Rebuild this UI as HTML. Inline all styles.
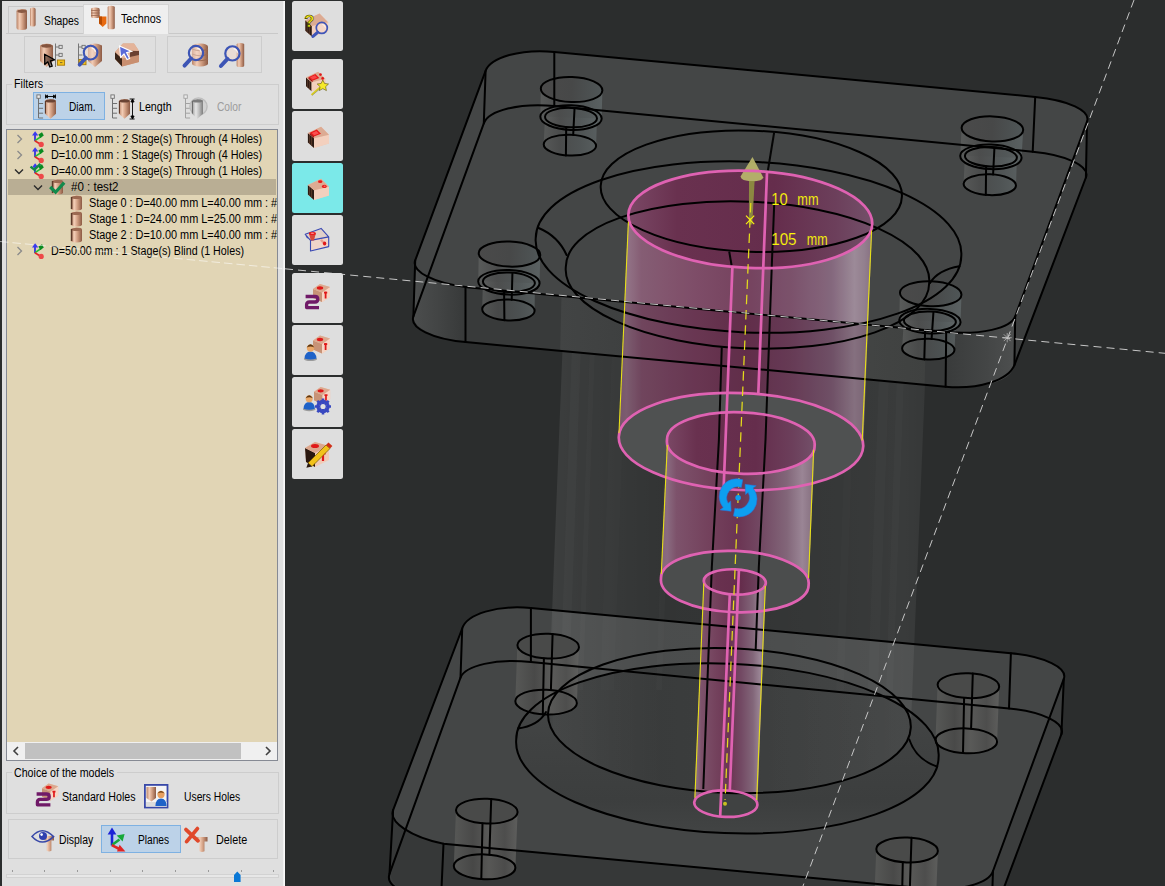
<!DOCTYPE html>
<html><head><meta charset="utf-8"><title>Holes</title>
<style>
html,body{margin:0;padding:0;}
body{width:1165px;height:886px;overflow:hidden;background:#2b2d2d;position:relative;font-family:"Liberation Sans",sans-serif;font-size:12px;color:#000;}

#pbg{position:absolute;left:2px;top:1px;width:283px;height:885px;background:#dfdfdf;}
#pbg i{position:absolute;right:0;top:0;width:2px;height:100%;background:linear-gradient(90deg,#ececec,#fdfdfd);}
.gb{position:absolute;border:1px solid #cdcdcd;box-sizing:border-box;}
.t{position:absolute;white-space:nowrap;line-height:14px;height:14px;font-size:12px;transform:scaleX(0.885);transform-origin:0 50%;color:#000;}
.sel{position:absolute;box-sizing:border-box;background:#bcd2e8;border:1px solid #7eb1e2;}
.tb{position:absolute;left:292px;width:51px;height:50px;background:#dedede;border-radius:2.5px;}
.ic{position:absolute;overflow:visible;}
#tree{position:absolute;left:6px;top:129px;width:272px;height:632px;box-sizing:border-box;background:#e1d5b5;border:1px solid #868a94;overflow:hidden;}
#tree .t{font-size:12px;}
#tree .row{position:absolute;left:1px;width:268px;height:16px;}

</style></head><body>
<svg width="1165" height="886" viewBox="0 0 1165 886" style="position:absolute;left:0;top:0">
<defs>
<clipPath id="vp"><rect x="285" y="0" width="880" height="886"/></clipPath>
<linearGradient id="gpk" x1="0" x2="1" y1="0" y2="0">
<stop offset="0" stop-color="#84637a"/><stop offset="0.03" stop-color="#8a6a7e"/><stop offset="0.09" stop-color="#7c5069"/><stop offset="0.3" stop-color="#743f5c"/><stop offset="0.5" stop-color="#6b3452"/><stop offset="0.68" stop-color="#714460"/><stop offset="0.84" stop-color="#7b5c73"/><stop offset="0.93" stop-color="#948190"/><stop offset="0.97" stop-color="#8a7585"/><stop offset="1" stop-color="#7d6577"/>
</linearGradient>
<linearGradient id="gpk2" x1="0" x2="1" y1="0" y2="0">
<stop offset="0" stop-color="#85647b"/><stop offset="0.04" stop-color="#8a6b80"/><stop offset="0.1" stop-color="#7d526b"/><stop offset="0.3" stop-color="#74425d"/><stop offset="0.5" stop-color="#6b3553"/><stop offset="0.66" stop-color="#734a64"/><stop offset="0.82" stop-color="#826679"/><stop offset="0.92" stop-color="#9a8595"/><stop offset="0.97" stop-color="#8c7686"/><stop offset="1" stop-color="#7f687a"/>
</linearGradient>
<linearGradient id="gpk0" x1="0" x2="1" y1="0" y2="0">
<stop offset="0" stop-color="#7a4865"/><stop offset="0.2" stop-color="#69314f"/><stop offset="0.6" stop-color="#652d4c"/><stop offset="0.85" stop-color="#6c3f5b"/><stop offset="1" stop-color="#735069"/>
</linearGradient>
<linearGradient id="gcol" x1="0" x2="1" y1="0" y2="0">
<stop offset="0" stop-color="#fff" stop-opacity="0.04"/><stop offset="0.015" stop-color="#fff" stop-opacity="0.08"/><stop offset="0.06" stop-color="#fff" stop-opacity="0.072"/><stop offset="0.14" stop-color="#fff" stop-opacity="0.06"/><stop offset="0.3" stop-color="#fff" stop-opacity="0.035"/><stop offset="0.55" stop-color="#fff" stop-opacity="0.04"/><stop offset="0.8" stop-color="#fff" stop-opacity="0.055"/><stop offset="0.93" stop-color="#fff" stop-opacity="0.068"/><stop offset="0.985" stop-color="#fff" stop-opacity="0.055"/><stop offset="1" stop-color="#fff" stop-opacity="0.03"/>
</linearGradient>
<linearGradient id="gfil" x1="0" x2="0" y1="0" y2="1"><stop offset="0" stop-color="#484a4a"/><stop offset="0.45" stop-color="#404242"/><stop offset="0.8" stop-color="#3c3e3e"/><stop offset="1" stop-color="#424444"/></linearGradient>
<linearGradient id="gint" x1="0" x2="1" y1="0" y2="0"><stop offset="0" stop-color="#353737"/><stop offset="0.25" stop-color="#323434"/><stop offset="0.6" stop-color="#353737"/><stop offset="1" stop-color="#3a3c3c"/></linearGradient>
<linearGradient id="gcolf" x1="0" x2="1" y1="0" y2="0"><stop offset="0" stop-color="#424444"/><stop offset="0.1" stop-color="#404242"/><stop offset="0.3" stop-color="#3b3d3d"/><stop offset="0.6" stop-color="#3c3e3e"/><stop offset="0.85" stop-color="#424443"/><stop offset="1" stop-color="#3f4140"/></linearGradient>
<linearGradient id="gcl" x1="0" x2="1" y1="0" y2="0"><stop offset="0" stop-color="#4b4d4d"/><stop offset="0.5" stop-color="#424444"/><stop offset="1" stop-color="#373939"/></linearGradient>
<linearGradient id="gcr" x1="0" x2="1" y1="0" y2="0"><stop offset="0" stop-color="#393b3b"/><stop offset="0.6" stop-color="#444646"/><stop offset="1" stop-color="#4d4f4f"/></linearGradient>
<linearGradient id="ghole" x1="0" x2="1" y1="0" y2="0">
<stop offset="0" stop-color="#5e605f"/><stop offset="0.3" stop-color="#4d4e4e"/><stop offset="0.7" stop-color="#545a5b"/><stop offset="1" stop-color="#606869"/>
</linearGradient>
<linearGradient id="gholet" x1="0" x2="1" y1="0" y2="0"><stop offset="0" stop-color="#4a4a4a"/><stop offset="0.5" stop-color="#474848"/><stop offset="1" stop-color="#4f5657"/></linearGradient>
<linearGradient id="gholeb" x1="0" x2="1" y1="0" y2="0">
<stop offset="0" stop-color="#5a5b59"/><stop offset="0.3" stop-color="#4a4a49"/><stop offset="0.55" stop-color="#5d5d5b"/><stop offset="0.8" stop-color="#4f4f4e"/><stop offset="1" stop-color="#626260"/>
</linearGradient>
</defs>
<g clip-path="url(#vp)">
<rect x="285" y="0" width="880" height="886" fill="#2b2d2d"/>
<path d="M389.5 873.8C385 886.1 407.2 897.6 440 900L925 945C958.6 947.8 987.2 939 990 925L1061.4 734.2C1065.8 723 1042.7 711.6 1009 708.4L530.9 662.1C496.2 658.4 465.3 665.3 460.5 677.7Z" fill="#3a3c3c"/>
<path d="M1063.8 678.9L1061.4 734.2L1005 886L920 886L993 871Z" fill="#3b3d3d"/>
<path d="M393.1 810.1L389.5 873.8L396 886L930 886L925 888L443.5 843.8Z" fill="#363838"/>
<path d="M393.1 810.1C388.6 822.1 410.7 836.9 443.5 843.8L925 888.4C958.9 891.6 988.8 883.9 993 871L1063.8 678.9C1067.9 667.7 1044.7 656.4 1010.9 653.2L530.9 608C497 604.9 466.7 613.9 462.2 628.5Z" fill="#444646"/>
<clipPath id="cbp"><path d="M516.2 739.7A211.4 83.6 2.4 1 1 938.6 757.1A211.4 83.6 2.4 1 1 516.2 739.7Z"/></clipPath>
<path d="M516.2 739.7A211.4 83.6 2.4 1 1 938.6 757.1A211.4 83.6 2.4 1 1 516.2 739.7Z" fill="url(#gfil)"/>
<path d="M548 713.6A181.5 72.3 2.2 1 1 910.8 727.6A181.5 72.3 2.2 1 1 548 713.6Z" fill="url(#gint)" clip-path="url(#cbp)"/>
<path d="M565.8 267L929.2 283L910.8 727.6A181.5 72.3 2.22 0 1 548 713.6Z" fill="url(#gcol)"/>
<g fill="#fff">
<path d="M572 345L581 345L569 690L560 690Z" opacity="0.025"/>
<path d="M590 345L595 345L583 690L578 690Z" opacity="0.018"/>
<path d="M612 345L626 345L614 690L600 690Z" opacity="0.012"/>
<path d="M668 345L674 345L662 690L656 690Z" opacity="0.015"/>
<path d="M880 345L890 345L878 690L868 690Z" opacity="0.02"/>
<path d="M898 345L905 345L893 690L886 690Z" opacity="0.02"/>
<path d="M848 345L856 345L844 690L836 690Z" opacity="0.012"/>
</g>
<path d="M413.4 316.3C409.3 327.7 432.2 339 465.5 342L945.6 386.7C978.2 389.7 1008.5 380.2 1014.4 365.1L1085.9 177.5C1090.3 166.3 1066.9 154.9 1032.7 151.7L554.3 106C519.6 102.7 488.6 110.4 483.8 123.4Z" fill="#3b3d3d"/>
<path d="M415.2 260.4L413.4 316.3L465.5 342L945.6 386.7L1014.4 365.1L1015.2 316.4L946.4 332L467 287.2Z" fill="#383a3a"/>
<path d="M561.5 296.2L926 330.5L924.6 384.8L560.2 350.7Z" fill="url(#gcolf)"/>
<path d="M415.2 260.4L413.4 316.3C413 327 432 338 465.5 342L465.5 288C440 284 416 272 415.2 260.4Z" fill="url(#gcl)"/>
<path d="M946.2 332L945.6 386.7C985 390 1013 380 1014.4 365.1L1015.2 316.4C1012 328 985 334 946.2 332Z" fill="url(#gcr)"/>
<path d="M1087 121.5L1085.9 177.5L1014.4 365.1L1015.2 316.4Z" fill="#3d3f3f"/>
<path d="M415.2 260.4C411.1 271.4 433.8 283.2 467 287.2L946.4 332C980.4 335.2 1010.7 328.3 1015.2 316.4L1087 121.5C1091 110.8 1068.2 100 1035.2 96.9L554.3 51.9C520.9 48.8 490.7 57.1 485.6 70.9Z" fill="#444646"/>
<path d="M540.8 88.5L540.4 116.8A30.6 12.3 2 0 0 601.6 118.4L602.4 90.5Z" fill="url(#ghole)" opacity="0.8"/>
<path d="M545 116.6L543.7 144.3A26.2 10.4 2 0 0 596.1 145.9L597 118.6Z" fill="url(#ghole)" opacity="0.7"/>
<ellipse cx="571.6" cy="89.5" rx="30.8" ry="12.5" transform="rotate(2 571.6 89.5)" fill="url(#gholet)"/>
<path d="M961.6 127.9L960.3 156A30.6 12.3 2 0 0 1021.5 157.6L1023.2 129.9Z" fill="url(#ghole)" opacity="0.8"/>
<path d="M964.9 155.8L963.6 183.9A26.2 10.4 2 0 0 1016 185.5L1016.9 157.8Z" fill="url(#ghole)" opacity="0.7"/>
<ellipse cx="992.4" cy="128.9" rx="30.8" ry="12.5" transform="rotate(2 992.4 128.9)" fill="url(#gholet)"/>
<path d="M478.7 253.1L478.3 281.5A30.6 12.3 2 0 0 539.5 283.1L540.3 255.1Z" fill="url(#ghole)" opacity="0.8"/>
<path d="M482.9 281.3L482.2 309.2A26.2 10.4 2 0 0 534.6 310.8L534.9 283.3Z" fill="url(#ghole)" opacity="0.7"/>
<ellipse cx="509.5" cy="254.1" rx="30.8" ry="12.5" transform="rotate(2 509.5 254.1)" fill="url(#gholet)"/>
<path d="M899.9 292.7L899.3 320.4A30.6 12.3 2 0 0 960.5 322L961.5 294.7Z" fill="url(#ghole)" opacity="0.8"/>
<path d="M903.9 320.2L902.1 348.3A26.2 10.4 2 0 0 954.5 349.9L955.9 322.2Z" fill="url(#ghole)" opacity="0.7"/>
<ellipse cx="930.7" cy="293.7" rx="30.8" ry="12.5" transform="rotate(2 930.7 293.7)" fill="url(#gholet)"/>
<path d="M517.4 645.1L515.3 701.3A30.8 12.4 2 0 0 576.9 702.9L579 647.1Z" fill="url(#gholeb)" opacity="0.85"/>
<ellipse cx="548.2" cy="646.1" rx="30.8" ry="12.4" transform="rotate(2 548.2 646.1)" fill="#494a49"/>
<path d="M937.6 684.7L935.5 740A30.8 12.4 2 0 0 997.1 741.6L999.2 686.7Z" fill="url(#gholeb)" opacity="0.85"/>
<ellipse cx="968.4" cy="685.7" rx="30.8" ry="12.4" transform="rotate(2 968.4 685.7)" fill="#494a49"/>
<path d="M456 810.1L453.8 866A30.8 12.4 2 0 0 515.4 867.6L517.6 812.1Z" fill="url(#gholeb)" opacity="0.85"/>
<ellipse cx="486.8" cy="811.1" rx="30.8" ry="12.4" transform="rotate(2 486.8 811.1)" fill="#494a49"/>
<path d="M876.3 849L874.1 904.7A30.8 12.4 2 0 0 935.7 906.3L937.9 851Z" fill="url(#gholeb)" opacity="0.85"/>
<ellipse cx="907.1" cy="850" rx="30.8" ry="12.4" transform="rotate(2 907.1 850)" fill="#494a49"/>
<clipPath id="cb0"><path d="M628.4 214.5A122 48.3 2.3 0 1 872.2 224.3L863.2 446.5A122.3 48.2 2.3 0 1 618.8 436.7Z" fill="#000"/></clipPath>
<path d="M628.4 214.5A122 48.3 2.3 0 1 872.2 224.3L863.2 446.5A122.3 48.2 2.3 0 1 618.8 436.7Z" fill="url(#gpk)"/>
<g clip-path="url(#cb0)"><path d="M600 150L900 150L900 327.9L600 299.1Z" fill="#fff" opacity="0.075"/><path d="M600 299.1L900 327.9L900 520L600 520Z" fill="#20000c" opacity="0.13"/></g>
<path d="M628.4 214.5A122 48.3 2.3 1 1 872.2 224.3A122 48.3 2.3 1 1 628.4 214.5Z" fill="url(#gpk0)"/>
<path d="M618.8 436.7A122.3 48.2 2.3 1 1 863.2 446.5A122.3 48.2 2.3 1 1 618.8 436.7Z" fill="#4f5151"/>
<path d="M667 440A73.9 29.7 2.3 0 1 814.6 446L808.6 584.6A73.9 29.7 2.3 0 1 661 578.6Z" fill="url(#gpk2)"/>
<path d="M667 440A73.9 29.7 2.3 1 1 814.6 446A73.9 29.7 2.3 1 1 667 440Z" fill="url(#gpk0)"/>
<path d="M661 578.6A73.9 29.7 2.3 1 1 808.6 584.6A73.9 29.7 2.3 1 1 661 578.6Z" fill="#4b4d4d"/>
<path d="M703.8 580.7A31 12.6 2.3 0 1 765.8 583.1L757.4 805A31.6 13.2 2.3 0 1 694.2 802.4Z" fill="url(#gpk2)"/>
<path d="M703.8 580.7A31 12.6 2.3 1 1 765.8 583.1A31 12.6 2.3 1 1 703.8 580.7Z" fill="url(#gpk0)"/>
<path d="M694.2 802.4A31.6 13.2 2.3 1 1 757.4 805A31.6 13.2 2.3 1 1 694.2 802.4Z" fill="#404242"/>
<g fill="none" stroke="#000" stroke-width="2" stroke-linecap="round" stroke-linejoin="round">
<path d="M415.2 260.4C411.1 271.4 433.8 283.2 467 287.2L946.4 332C980.4 335.2 1010.7 328.3 1015.2 316.4L1087 121.5C1091 110.8 1068.2 100 1035.2 96.9L554.3 51.9C520.9 48.8 490.7 57.1 485.6 70.9Z"/>
<path d="M413.4 316.3C409.3 327.7 432.2 339 465.5 342L945.6 386.7C978.2 389.7 1008.5 380.2 1014.4 365.1L1085.9 177.5C1090.3 166.3 1066.9 154.9 1032.7 151.7L554.3 106C519.6 102.7 488.6 110.4 483.8 123.4Z"/>
<path d="M393.1 810.1C388.6 822.1 410.7 836.9 443.5 843.8L925 888.4C958.9 891.6 988.8 883.9 993 871L1063.8 678.9C1067.9 667.7 1044.7 656.4 1010.9 653.2L530.9 608C497 604.9 466.7 613.9 462.2 628.5Z"/>
<path d="M389.5 873.8C385 886.1 407.2 897.6 440 900L925 945C958.6 947.8 987.2 939 990 925L1061.4 734.2C1065.8 723 1042.7 711.6 1009 708.4L530.9 662.1C496.2 658.4 465.3 665.3 460.5 677.7Z"/>
<path d="M415.2 260.4L413.4 316.3"/>
<path d="M465.5 288L465.5 342"/>
<path d="M946.2 332L945.6 386.7"/>
<path d="M1015.2 316.4L1014.4 365.1"/>
<path d="M1087 121.5L1085.9 177.5"/>
<path d="M1035.2 96.9L1032.7 151.7"/>
<path d="M554.3 51.9L554.3 106"/>
<path d="M485.6 70.9L483.8 123.4"/>
<path d="M393.1 810.1L389.5 873.8"/>
<path d="M443.5 843.8L441 900"/>
<path d="M993 871L992 900"/>
<path d="M1063.8 678.9L1061.4 734.2"/>
<path d="M1010.9 653.2L1009 708.4"/>
<path d="M530.9 608L530.9 662.1"/>
<path d="M462.2 628.5L460.5 677.7"/>
<path d="M600.7 185.8A150.7 60.2 2 1 1 901.9 196.6A150.7 60.2 2 1 1 600.7 185.8Z"/>
<path d="M535.7 238.2A213 84.4 2.4 1 1 961.3 256A213 84.4 2.4 1 1 535.7 238.2Z"/>
<path d="M565.8 267.1A181.9 72.1 2.5 1 1 929.2 282.9A181.9 72.1 2.5 1 1 565.8 267.1Z"/>
<path d="M516.2 739.7A211.4 83.6 2.4 1 1 938.6 757.1A211.4 83.6 2.4 1 1 516.2 739.7Z"/>
<path d="M548 713.6A181.5 72.3 2.2 1 1 910.8 727.6A181.5 72.3 2.2 1 1 548 713.6Z"/>
<path d="M538.6 228Q558 236 566.6 255"/>
<path d="M959.5 266.3Q938 270 930 283"/>
<path d="M518 728.4Q538 726 546 712"/>
<path d="M909.3 739.5Q916 759.5 937.2 766.6"/>
<ellipse cx="571.6" cy="89.5" rx="30.8" ry="12.5" transform="rotate(2 571.6 89.5)" />
<ellipse cx="571" cy="117.6" rx="30.7" ry="12.3" transform="rotate(2 571 117.6)" />
<ellipse cx="571" cy="117.6" rx="26" ry="9.7" transform="rotate(2 571 117.6)" />
<ellipse cx="569.9" cy="145.1" rx="26.2" ry="10.4" transform="rotate(2 569.9 145.1)" />
<path d="M574.5 109L573.2 134.9"/>
<path d="M566.2 127.2L565.9 155.4"/>
<ellipse cx="992.4" cy="128.9" rx="30.8" ry="12.5" transform="rotate(2 992.4 128.9)" />
<ellipse cx="990.9" cy="156.8" rx="30.7" ry="12.3" transform="rotate(2 990.9 156.8)" />
<ellipse cx="990.9" cy="156.8" rx="26" ry="9.7" transform="rotate(2 990.9 156.8)" />
<ellipse cx="989.8" cy="184.7" rx="26.2" ry="10.4" transform="rotate(2 989.8 184.7)" />
<path d="M994.4 148.2L993.1 174.5"/>
<path d="M986.1 166.4L985.8 195"/>
<ellipse cx="509.5" cy="254.1" rx="30.8" ry="12.5" transform="rotate(2 509.5 254.1)" />
<ellipse cx="508.9" cy="282.3" rx="30.7" ry="12.3" transform="rotate(2 508.9 282.3)" />
<ellipse cx="508.9" cy="282.3" rx="26" ry="9.7" transform="rotate(2 508.9 282.3)" />
<ellipse cx="508.4" cy="310" rx="26.2" ry="10.4" transform="rotate(2 508.4 310)" />
<path d="M512.4 273.7L511.7 299.8"/>
<path d="M504.1 291.9L504.4 320.3"/>
<ellipse cx="930.7" cy="293.7" rx="30.8" ry="12.5" transform="rotate(2 930.7 293.7)" />
<ellipse cx="929.9" cy="321.2" rx="30.7" ry="12.3" transform="rotate(2 929.9 321.2)" />
<ellipse cx="929.9" cy="321.2" rx="26" ry="9.7" transform="rotate(2 929.9 321.2)" />
<ellipse cx="928.3" cy="349.1" rx="26.2" ry="10.4" transform="rotate(2 928.3 349.1)" />
<path d="M933.4 312.6L931.6 338.9"/>
<path d="M925.1 330.8L924.3 359.4"/>
<ellipse cx="548.2" cy="646.1" rx="30.8" ry="12.4" transform="rotate(2 548.2 646.1)" />
<ellipse cx="546.1" cy="702.1" rx="30.8" ry="12.4" transform="rotate(2 546.1 702.1)" />
<path d="M552.6 633.9L550.9 689.9"/>
<path d="M543.9 658.4L542.8 714.4"/>
<ellipse cx="968.4" cy="685.7" rx="30.8" ry="12.4" transform="rotate(2 968.4 685.7)" />
<ellipse cx="966.3" cy="740.8" rx="30.8" ry="12.4" transform="rotate(2 966.3 740.8)" />
<path d="M972.8 673.5L971.1 728.6"/>
<path d="M964.1 698L963 753.1"/>
<ellipse cx="486.8" cy="811.1" rx="30.8" ry="12.4" transform="rotate(2 486.8 811.1)" />
<ellipse cx="484.6" cy="866.8" rx="30.8" ry="12.4" transform="rotate(2 484.6 866.8)" />
<path d="M491.2 798.9L489.4 854.6"/>
<path d="M482.5 823.4L481.3 879.1"/>
<ellipse cx="907.1" cy="850" rx="30.8" ry="12.4" transform="rotate(2 907.1 850)" />
<ellipse cx="904.9" cy="905.5" rx="30.8" ry="12.4" transform="rotate(2 904.9 905.5)" />
<path d="M911.5 837.8L909.7 893.3"/>
<path d="M902.8 862.3L901.6 917.8"/>
</g>
<g fill="none" stroke="#050505" stroke-width="2" stroke-linecap="butt">
<path d="M774.3 131.5L767.9 170.5"/>
<path d="M774.2 204L772 260L765.5 440L758.8 567.5L755.7 649"/>
<path d="M721.8 346.5L718.9 440L711.8 567.5L703.3 789"/>
<path d="M729.2 251.5L731.6 265.5"/>
</g>
<path d="M752.5 156.9L763.2 177.3Q763 181 752 181.4Q741 181 740.5 176.6Z" fill="#b7b46a" opacity="0.95"/>
<path d="M749 181L754.6 181L752.3 224.5L748.9 224.5Z" fill="#8e8c40" opacity="0.95"/>
<g fill="none" stroke="#df62b2" stroke-width="2.7" stroke-linecap="round">
<path d="M628.4 214.5A122 48.3 2.3 1 1 872.2 224.3A122 48.3 2.3 1 1 628.4 214.5Z"/>
<path d="M618.8 436.7A122.3 48.2 2.3 1 1 863.2 446.5A122.3 48.2 2.3 1 1 618.8 436.7Z"/>
<path d="M667 440A73.9 29.7 2.3 1 1 814.6 446A73.9 29.7 2.3 1 1 667 440Z"/>
<path d="M661 578.6A73.9 29.7 2.3 1 1 808.6 584.6A73.9 29.7 2.3 1 1 661 578.6Z"/>
<path d="M703.8 580.7A31 12.6 2.3 1 1 765.8 583.1A31 12.6 2.3 1 1 703.8 580.7Z"/>
<path d="M694.2 802.4A31.6 13.2 2.3 1 1 757.4 805A31.6 13.2 2.3 1 1 694.2 802.4Z"/>
<path d="M767 172.5L758.3 393.7"/>
<path d="M732.4 267.2L723.6 489"/>
<path d="M738.9 570.2L729.8 790.5"/>
<path d="M729.8 594.5L720.2 815.7"/>
</g>
<g fill="none" stroke="#e6e018" stroke-width="1.1">
<path d="M628.4 221.7L619 433"/>
<path d="M871.6 230.5L862.2 440.5"/>
<path d="M667.3 445L661.3 574"/>
<path d="M813.6 449.7L808.6 578"/>
<path d="M703.8 583.6L694.9 797.7"/>
<path d="M765.3 586L756.7 800"/>
</g>
<path d="M750.8 203L725.1 800" stroke="#e4dc1c" stroke-width="1.25" stroke-dasharray="9.5 5.8" fill="none"/>
<circle cx="725" cy="803.7" r="2" fill="#c8c020"/>
<path d="M746 215.6L754.2 224.2M754.2 215.6L746 224.2" stroke="#f8f010" stroke-width="1.2" fill="none"/>
<g fill="#fbf60a" stroke="#682f4e" stroke-width="0.12" font-family="Liberation Sans, sans-serif" font-size="16.2">
<text x="771.2" y="204.8" textLength="16.4" lengthAdjust="spacingAndGlyphs">10</text><text x="797.3" y="204.8" textLength="21.2" lengthAdjust="spacingAndGlyphs">mm</text>
<text x="771.2" y="244.9" textLength="25.4" lengthAdjust="spacingAndGlyphs">105</text><text x="806.8" y="244.9" textLength="20.8" lengthAdjust="spacingAndGlyphs">mm</text>
</g>
<g transform="translate(738.1 497.8) scale(0.93)">
<circle r="3" fill="#0d9ff0"/>
<path d="M5 -19.5A19 19 0 0 0 -16 10.5L-19.5 13L-7.5 14.5L-8 3.5L-10.8 5.8A12 12 0 0 1 3.5 -11.2Z" fill="#0d9ff0" stroke="#2a6fdc" stroke-width="0.6"/>
<path d="M-5 19.5A19 19 0 0 0 16 -10.5L19.5 -13L7.5 -14.5L8 -3.5L10.8 -5.8A12 12 0 0 1 -3.5 11.2Z" fill="#0d9ff0" stroke="#2a6fdc" stroke-width="0.6"/>
</g>
</g>
<g fill="none" stroke="#c6c6c6" stroke-width="1" stroke-dasharray="8 5.1">
<path d="M285 268.8L1165 353.3" />
<path d="M1134 0L803 886"/>
</g>
<path d="M1002.7 337.7L1011.7 337.7M1007.2 333L1007.2 342.4M1003.8 334.3L1010.6 341.1M1010.6 334.3L1003.8 341.1" stroke="#c4c4c4" stroke-width="0.7" fill="none"/>
</svg><div id="pbg"><i></i></div>
<svg width="0" height="0" style="position:absolute"><defs>
<linearGradient id="cu" x1="0" x2="1" y1="0" y2="0"><stop offset="0" stop-color="#b98468"/><stop offset="0.3" stop-color="#f3cdb6"/><stop offset="0.6" stop-color="#cf9c80"/><stop offset="1" stop-color="#8c5a44"/></linearGradient>
<linearGradient id="cud" x1="0" x2="1" y1="0" y2="0"><stop offset="0" stop-color="#8a5a45"/><stop offset="0.5" stop-color="#c08c70"/><stop offset="1" stop-color="#6e4433"/></linearGradient>
<linearGradient id="gr" x1="0" x2="1" y1="0" y2="0"><stop offset="0" stop-color="#9a9a9a"/><stop offset="0.35" stop-color="#e6e6e6"/><stop offset="0.65" stop-color="#bdbdbd"/><stop offset="1" stop-color="#7e7e7e"/></linearGradient>
<linearGradient id="boxtop" x1="0" x2="1" y1="0" y2="1"><stop offset="0" stop-color="#d9a78d"/><stop offset="1" stop-color="#f1c9b3"/></linearGradient>
<g id="cube"><path d="M0 8L9 3L24 6L24 19L13 26L0 21Z" fill="#e9bfa8"/><path d="M0 8L13 12L13 26L0 21Z" fill="#2a1a12"/><path d="M13 12L24 6L24 19L13 26Z" fill="#f3cfbb"/><path d="M0 8L9 3L24 6L13 12Z" fill="url(#boxtop)"/></g>
<g id="mag"><circle cx="0" cy="0" r="6.2" fill="#f3d9cc" fill-opacity="0.55" stroke="#3d55b5" stroke-width="1.9"/><path d="M-4.3 4.8L-10 11" stroke="#3d55b5" stroke-width="3.4" stroke-linecap="round"/><path d="M1 -4.2Q4 -3.6 4.4 -0.6" stroke="#fff" stroke-width="1" fill="none" opacity="0.8"/></g>
<g id="coord"><path d="M3 10V4" stroke="#2a2ae0" stroke-width="1.7"/><path d="M0 4.6L3.1 0.2L6.3 4.6Z" fill="#3a3af0"/><path d="M3 9.6L9 5.6" stroke="#20c030" stroke-width="1.7"/><path d="M6.4 3.4L10 1.2L11.8 4.6L8.4 7Z" fill="#0a8a20"/><path d="M2.8 9.8L9 13.4" stroke="#e02828" stroke-width="1.7"/><circle cx="9.2" cy="13.4" r="2.6" fill="#ee4848"/></g>
</defs></svg>
<div style="position:absolute;left:6px;top:33px;width:272px;height:1px;background:#c9c9c9"></div>
<div class="gb" style="left:8px;top:6px;width:76px;height:28px;border-color:#c9c9c9;border-bottom:none;height:27px"></div>
<div class="gb" style="left:83px;top:4px;width:86px;height:30px;background:#efefef;border-color:#d4d4d4;border-bottom:none"></div>
<svg class="ic" style="left:16px;top:7px" width="24" height="25"><rect x="0.5" y="2" width="10.5" height="21" rx="4.5" ry="2.2" fill="url(#cu)"/><ellipse cx="5.8" cy="4.2" rx="4.4" ry="1.7" fill="#8a5a44"/><rect x="14" y="0.5" width="5.6" height="19" rx="2.6" ry="1.6" fill="url(#cu)"/></svg>
<div class="t" style="left:43.5px;top:14px;transform:scaleX(0.860);">Shapes</div>
<svg class="ic" style="left:90px;top:5px" width="26" height="26"><rect x="1" y="2.5" width="8.6" height="10.5" rx="3.6" ry="1.6" fill="url(#cu)"/><path d="M1 5.5h8.6M1 8h8.6M1 10.5h8.6" stroke="#9a6850" stroke-width="0.8"/><path d="M9 11.5h7.4v7l-3.7 3.6L9 18.5Z" fill="#e86a10"/><path d="M9 11.5h3v8.6l-3-1.6Z" fill="#b84a00"/><rect x="17.6" y="0.8" width="7.2" height="23.5" rx="3.2" ry="1.6" fill="url(#cu)"/></svg>
<div class="t" style="left:120.7px;top:12px;transform:scaleX(0.895);">Technos</div>
<div class="gb" style="left:24px;top:36px;width:132px;height:37px"></div>
<div class="gb" style="left:167px;top:36px;width:95px;height:37px"></div>
<svg class="ic" style="left:39px;top:42px" width="27" height="26"><path d="M1 3.5Q7.5 -0.5 14 3.5V19L7.5 25L1 19Z" fill="url(#cu)"/><ellipse cx="7.5" cy="3.8" rx="5.4" ry="1.9" fill="#84543e"/><path d="M16.5 1.5V25M16.5 5h4M16.5 13h4" stroke="#777" stroke-width="1" fill="none"/><rect x="20" y="3.3" width="3.2" height="3.2" fill="#ddd" stroke="#666" stroke-width="0.8"/><rect x="20" y="11.3" width="3.2" height="3.2" fill="#ddd" stroke="#666" stroke-width="0.8"/><rect x="18.4" y="18" width="7.2" height="5.2" fill="#f3c21c" stroke="#a87a08" stroke-width="0.9"/><path d="M21 20.6h2.4" stroke="#7a6a30" stroke-width="1"/><path d="M5.6 12.2L15.6 17.8L11.4 18.8L13.2 24.2L10.8 25L8.8 19.8L5.8 22.6Z" fill="#3a2a22" fill-opacity="0.55" stroke="#000" stroke-width="1.3" stroke-linejoin="round"/></svg>
<svg class="ic" style="left:77px;top:42px" width="27" height="26"><path d="M11 3.5Q17.5 -0.5 25 3.5V19L18 25L11 19Z" fill="url(#cu)"/><path d="M1.5 1.5V22M1.5 5h4M1.5 13h4" stroke="#777" stroke-width="1" fill="none"/><rect x="5" y="3.3" width="3.2" height="3.2" fill="#ddd" stroke="#666" stroke-width="0.8"/><rect x="2" y="17.5" width="7" height="5.2" fill="#f3c21c" stroke="#a87a08" stroke-width="0.9"/><use href="#mag" transform="translate(13.6 10.6) scale(1.1)"/></svg>
<svg class="ic" style="left:114px;top:42px" width="27" height="26"><path d="M1 10L9 1.5L20 1.5L25 9L25 20L8 24.5L1 17Z" fill="#d6a184"/><path d="M1 10L8 16.5V24.5L1 17Z" fill="#3a2418"/><path d="M8 16.5L25 13V20L8 24.5Z" fill="#c98f70"/><path d="M16 8.5L25 9V13L16 15Z" fill="#6b4030"/><path d="M1 10L9 1.5L20 1.5L25 9L16 8.5L16 15L8 16.5Z" fill="#e4b49a"/><path d="M5.5 4L17.6 9.4L12.6 10.6L15.6 16.4L13 17.6L10 12L6.6 15.4Z" fill="#5a6ad8" stroke="#fff" stroke-width="1.1"/></svg>
<svg class="ic" style="left:182px;top:42px" width="27" height="26"><rect x="10" y="1.5" width="16" height="23" rx="7" ry="3" fill="url(#cu)"/><path d="M10 7Q18 10.5 26 7M10 12Q18 15.5 26 12M10 17Q18 20.5 26 17" stroke="#9a6a52" stroke-width="1.1" fill="none"/><use href="#mag" transform="translate(14 11) scale(1.15)"/></svg>
<svg class="ic" style="left:219px;top:42px" width="27" height="26"><rect x="17.6" y="1" width="7.6" height="24" rx="3.4" ry="1.6" fill="url(#cu)"/><use href="#mag" transform="translate(13.4 11.4) scale(1.15)"/></svg>
<div class="gb" style="left:6px;top:84px;width:273px;height:41px"></div>
<div style="position:absolute;left:12px;top:78px;width:33px;height:13px;background:#dfdfdf"></div>
<div class="t" style="left:14.4px;top:77px;transform:scaleX(0.888);">Filters</div>
<div class="sel" style="left:33px;top:92px;width:72px;height:28px"></div>
<svg class="ic" style="left:36px;top:93.5px" width="26" height="26"><path d="M2.5 3.5V24M2.5 9.5h4.6M2.5 14.3h4.6M2.5 19.2h4.6M2.5 24h4.6" stroke="#707070" stroke-width="1" fill="none"/><rect x="0.9" y="0.9" width="3.4" height="3.4" fill="#ececec" stroke="#707070" stroke-width="0.9"/><path d="M9 6.5Q14.5 3.6 20 6.5V19.8L14.5 24.8L9 19.8Z" fill="url(#cu)"/><ellipse cx="14.5" cy="6.9" rx="4.9" ry="1.7" fill="#6b4434"/><path d="M9.4 7V19.6" stroke="#5a3626" stroke-width="1.1"/><path d="M9.5 2.5h10M9.5 0.5v4M19.5 0.5v4M9.5 2.5l2-1.4v2.8ZM19.5 2.5l-2-1.4v2.8Z" stroke="#000" stroke-width="0.9" fill="#000"/></svg>
<div class="t" style="left:68.5px;top:100px;transform:scaleX(0.845);">Diam.</div>
<svg class="ic" style="left:110px;top:93.5px" width="26" height="26"><path d="M2.5 3.5V24M2.5 9.5h4.6M2.5 14.3h4.6M2.5 19.2h4.6M2.5 24h4.6" stroke="#707070" stroke-width="1" fill="none"/><rect x="0.9" y="0.9" width="3.4" height="3.4" fill="#ececec" stroke="#707070" stroke-width="0.9"/><path d="M9 6.5Q14.5 3.6 20 6.5V19.8L14.5 24.8L9 19.8Z" fill="url(#cu)"/><ellipse cx="14.5" cy="6.9" rx="4.9" ry="1.7" fill="#6b4434"/><path d="M9.4 7V19.6" stroke="#5a3626" stroke-width="1.1"/><path d="M22.5 5.5v19M19.6 5h5M19.6 25h5M22.5 5l-1.6 3h3.2ZM22.5 25l-1.6-3h3.2Z" stroke="#000" stroke-width="0.9" fill="#000"/></svg>
<div class="t" style="left:139.4px;top:100px;transform:scaleX(0.889);">Length</div>
<svg class="ic" style="left:183px;top:93.5px" width="26" height="26"><path d="M2.5 3.5V24M2.5 9.5h4.6M2.5 14.3h4.6M2.5 19.2h4.6M2.5 24h4.6" stroke="#a2a2a2" stroke-width="1" fill="none"/><rect x="0.9" y="0.9" width="3.4" height="3.4" fill="#ececec" stroke="#a2a2a2" stroke-width="0.9"/><circle cx="15.5" cy="12.5" r="8.6" fill="#d2d2d2" stroke="#bdbdbd" stroke-width="1.4"/><path d="M9 6.5Q14.5 3.6 20 6.5V19.8L14.5 24.8L9 19.8Z" fill="url(#gr)"/><ellipse cx="14.5" cy="6.9" rx="4.9" ry="1.7" fill="#7c7c7c"/><path d="M9.4 7V19.6" stroke="#6a6a6a" stroke-width="1.1"/></svg>
<div class="t" style="left:216.6px;top:100px;transform:scaleX(0.851);color:#9c9c9c">Color</div>
<div id="tree">
<svg class="ic" style="left:8.5px;top:4px" width="8" height="10"><path d="M1.5 1L5.5 5L1.5 9" stroke="#8a8a8a" stroke-width="1.3" fill="none"/></svg>
<svg class="ic" style="left:25.0px;top:1px" width="14" height="17"><use href="#coord"/></svg>
<div class="t" style="left:43.5px;top:2px;transform:scaleX(0.901);">D=10.00 mm : 2 Stage(s) Through (4 Holes)</div>
<svg class="ic" style="left:8.5px;top:20px" width="8" height="10"><path d="M1.5 1L5.5 5L1.5 9" stroke="#8a8a8a" stroke-width="1.3" fill="none"/></svg>
<svg class="ic" style="left:25.0px;top:17px" width="14" height="17"><use href="#coord"/></svg>
<div class="t" style="left:43.5px;top:18px;transform:scaleX(0.901);">D=10.00 mm : 1 Stage(s) Through (4 Holes)</div>
<svg class="ic" style="left:7px;top:38px" width="10" height="8"><path d="M1 1.5L5 5.5L9 1.5" stroke="#2b2b2b" stroke-width="1.4" fill="none"/></svg>
<svg class="ic" style="left:25.0px;top:33px" width="14" height="17"><use href="#coord"/><path d="M-1.5 3.6L2.4 6.6L8.4 0.8" stroke="#0f8a4a" stroke-width="2.4" fill="none"/></svg>
<div class="t" style="left:43.5px;top:34px;transform:scaleX(0.901);">D=40.00 mm : 3 Stage(s) Through (1 Holes)</div>
<div class="row" style="top:49px;background:#b9ae94"></div>
<svg class="ic" style="left:25.5px;top:54px" width="10" height="8"><path d="M1 1.5L5 5.5L9 1.5" stroke="#2b2b2b" stroke-width="1.4" fill="none"/></svg>
<svg class="ic" style="left:44px;top:48px" width="14" height="17"><rect x="1" y="1.5" width="11" height="15" rx="5" ry="2.2" fill="url(#cu)"/><ellipse cx="6.5" cy="3.4" rx="4.6" ry="1.6" fill="#9c6a52"/><path d="M1.6 3v12" stroke="#5e3a2a" stroke-width="1.6"/></svg>
<svg class="ic" style="left:42px;top:50px" width="16" height="14"><path d="M1.2 7L6.6 12.2L15.2 2.6" stroke="#128a4c" stroke-width="3.2" fill="none"/></svg>
<div class="t" style="left:64px;top:50px;transform:scaleX(0.963);">#0 : test2</div>
<svg class="ic" style="left:63px;top:64px" width="14" height="17"><rect x="1" y="1.5" width="11" height="15" rx="5" ry="2.2" fill="url(#cu)"/><ellipse cx="6.5" cy="3.4" rx="4.6" ry="1.6" fill="#9c6a52"/><path d="M1.6 3v12" stroke="#5e3a2a" stroke-width="1.6"/></svg>
<div class="t" style="left:81.6px;top:66px;transform:scaleX(0.907);">Stage 0 : D=40.00 mm L=40.00 mm : #10</div>
<svg class="ic" style="left:63px;top:80px" width="14" height="17"><rect x="1" y="1.5" width="11" height="15" rx="5" ry="2.2" fill="url(#cu)"/><ellipse cx="6.5" cy="3.4" rx="4.6" ry="1.6" fill="#9c6a52"/><path d="M1.6 3v12" stroke="#5e3a2a" stroke-width="1.6"/></svg>
<div class="t" style="left:81.6px;top:82px;transform:scaleX(0.907);">Stage 1 : D=24.00 mm L=25.00 mm : #10</div>
<svg class="ic" style="left:63px;top:96px" width="14" height="17"><rect x="1" y="1.5" width="11" height="15" rx="5" ry="2.2" fill="url(#cu)"/><ellipse cx="6.5" cy="3.4" rx="4.6" ry="1.6" fill="#9c6a52"/><path d="M1.6 3v12" stroke="#5e3a2a" stroke-width="1.6"/></svg>
<div class="t" style="left:81.6px;top:98px;transform:scaleX(0.907);">Stage 2 : D=10.00 mm L=40.00 mm : #10</div>
<svg class="ic" style="left:8.5px;top:116px" width="8" height="10"><path d="M1.5 1L5.5 5L1.5 9" stroke="#8a8a8a" stroke-width="1.3" fill="none"/></svg>
<svg class="ic" style="left:25.0px;top:113px" width="14" height="17"><use href="#coord"/></svg>
<div class="t" style="left:43.5px;top:114px;transform:scaleX(0.892);">D=50.00 mm : 1 Stage(s) Blind (1 Holes)</div>
<div style="position:absolute;left:0;top:612px;width:270px;height:18px;background:#f0f0f0"></div>
<div style="position:absolute;left:18px;top:613px;width:216px;height:16px;background:#c1c1c1"></div>
<svg class="ic" style="left:5px;top:616px" width="8" height="10"><path d="M6 1L2 5L6 9" stroke="#404040" stroke-width="1.6" fill="none"/></svg>
<svg class="ic" style="left:257px;top:616px" width="8" height="10"><path d="M2 1L6 5L2 9" stroke="#404040" stroke-width="1.6" fill="none"/></svg>
</div>
<div class="gb" style="left:6px;top:772px;width:273px;height:42px"></div>
<div style="position:absolute;left:12px;top:766px;width:105px;height:13px;background:#dfdfdf"></div>
<div class="t" style="left:14.4px;top:766px;transform:scaleX(0.887);">Choice of the models</div>
<svg class="ic" style="left:34px;top:783px" width="27" height="26"><g transform="translate(8 0.5) scale(0.95)"><path d="M0 5L7 0L17 3L17 13L9 18L0 14Z" fill="#eec4ae"/><path d="M0 5L9 8.5V18L0 14Z" fill="#c79377"/><path d="M9 8.5L17 3V13L9 18Z" fill="#f6d6c5"/><path d="M0 5L7 0L17 3L9 8.5Z" fill="#dba98f"/><ellipse cx="7" cy="4" rx="3.2" ry="1.7" fill="#e01818"/><path d="M12.6 7.5v7M11 8.6h3.2" stroke="#e01818" stroke-width="1.8"/></g><path d="M2.6 11H12.4Q15.2 11 15.2 13.7Q15.2 16.4 12.4 16.4H6Q3.4 16.4 3.4 19V21.8H16.4" fill="none" stroke="#701a68" stroke-width="3.3" stroke-linejoin="round"/></svg>
<div class="t" style="left:62.2px;top:790px;transform:scaleX(0.889);">Standard Holes</div>
<svg class="ic" style="left:144px;top:784px" width="25" height="25"><rect x="0.9" y="0.9" width="22.6" height="22.6" fill="#f4f4f4" stroke="#3848a8" stroke-width="1.8"/><path d="M2.5 3h9.5v11l-4.7 3.4L2.5 14Z" fill="url(#cu)"/><path d="M2 18h21v4.6H2Z" fill="#dcdcdc"/><circle cx="17" cy="10.4" r="3.6" fill="#e8a060"/><path d="M13.4 9.4Q17 4.4 20.6 9.4Q17 7.6 13.4 9.4Z" fill="#6a3c10"/><path d="M11.4 22Q11.6 15 17 14.6Q22.4 15 22.6 22Z" fill="#1e62c8"/></svg>
<div class="t" style="left:184.2px;top:790px;transform:scaleX(0.861);">Users Holes</div>
<div class="gb" style="left:8px;top:819px;width:270px;height:40px"></div>
<svg class="ic" style="left:31px;top:827px" width="27" height="26"><path d="M13.5 9h9.5v4.4h-2.6v10.4q-2.4 1.4 -4.6 0V13.4h-2.3Z" fill="url(#cu)"/><path d="M1 9.6Q11 -2 22.6 9.6Q11 20.6 1 9.6Z" fill="none" stroke="#3848a8" stroke-width="1.5"/><circle cx="12" cy="9" r="4" fill="#3040b0"/><circle cx="10.6" cy="7.6" r="1.3" fill="#fff"/></svg>
<div class="t" style="left:59.2px;top:833px;transform:scaleX(0.869);">Display</div>
<div class="sel" style="left:101px;top:825px;width:80px;height:28px"></div>
<svg class="ic" style="left:107px;top:827px" width="20" height="26"><path d="M5 18.5V6.5" stroke="#1c22d6" stroke-width="2.6"/><path d="M0.6 7.6L5 0.4L9.4 7.6Z" fill="#1c22d6"/><path d="M5 18L12.5 12.5" stroke="#16a83a" stroke-width="2.6"/><path d="M9.6 8.6L17.6 7L15.6 14.6Z" fill="#16a83a"/><path d="M4.8 18.2L12.4 22" stroke="#e02424" stroke-width="2.6"/><path d="M12.6 17.8L18.4 24.4L10 24.6Z" fill="#e02424"/></svg>
<div class="t" style="left:138.4px;top:833px;transform:scaleX(0.848);">Planes</div>
<svg class="ic" style="left:184px;top:827px" width="27" height="26"><path d="M12.5 10h11v4.6h-3v9.6q-2.6 1.4 -5 0V14.6h-3Z" fill="url(#cu)"/><path d="M2 2.6L14 13.8M13.4 1.6L2.6 14.6" stroke="#e0482a" stroke-width="3.8" stroke-linecap="round"/></svg>
<div class="t" style="left:216px;top:833px;transform:scaleX(0.899);">Delete</div>
<div style="position:absolute;left:12px;top:870px;width:1px;height:2px;background:#9a9a9a"></div>
<div style="position:absolute;left:44px;top:870px;width:1px;height:2px;background:#9a9a9a"></div>
<div style="position:absolute;left:77px;top:870px;width:1px;height:2px;background:#9a9a9a"></div>
<div style="position:absolute;left:110px;top:870px;width:1px;height:2px;background:#9a9a9a"></div>
<div style="position:absolute;left:142px;top:870px;width:1px;height:2px;background:#9a9a9a"></div>
<div style="position:absolute;left:175px;top:870px;width:1px;height:2px;background:#9a9a9a"></div>
<div style="position:absolute;left:208px;top:870px;width:1px;height:2px;background:#9a9a9a"></div>
<div style="position:absolute;left:241px;top:870px;width:1px;height:2px;background:#9a9a9a"></div>
<div style="position:absolute;left:273px;top:870px;width:1px;height:2px;background:#9a9a9a"></div>
<div style="position:absolute;left:6px;top:874px;width:273px;height:4px;box-sizing:border-box;background:#e7e7e7;border:1px solid #d2d2d2"></div>
<svg class="ic" style="left:233px;top:871px" width="9" height="12"><path d="M1 4L4.3 0.6L7.6 4V11H1Z" fill="#0a78d6"/></svg>
<div class="tb" style="top:1px;"></div>
<div class="tb" style="top:59px;"></div>
<div class="tb" style="top:111px;"></div>
<div class="tb" style="top:163px;background:#7be9e9;"></div>
<div class="tb" style="top:215px;"></div>
<div class="tb" style="top:273px;"></div>
<div class="tb" style="top:325px;"></div>
<div class="tb" style="top:377px;"></div>
<div class="tb" style="top:429px;"></div>
<svg class="ic" style="left:303px;top:11px" width="30" height="30"><g transform="translate(-3 -3.6) scale(1.08)"><path d="M4.9 11.9L18.1 5.7L26 13.7L26 22.5L11 26.9L4.9 21.6Z" fill="#efc8b4"/><path d="M4.9 11.9L11 17.2V26.9L4.9 21.6Z" fill="#2c1a12"/><path d="M6.6 13.6V23M8.6 15.4V24.8" stroke="#6a4634" stroke-width="0.7"/><path d="M11 17.2L26 13.7V22.5L11 26.9Z" fill="#f3d0be"/><path d="M4.9 11.9L18.1 5.7L26 13.7L11 17.2Z" fill="#dcab93"/></g><circle cx="18.8" cy="16.9" r="5.5" fill="#f6dccf" fill-opacity="0.6" stroke="#3f55b8" stroke-width="1.7"/><path d="M14.6 21.4L10 25.4" stroke="#3f55b8" stroke-width="3.2" stroke-linecap="round"/><path d="M19.4 13.4Q22 14 22.4 16.6" stroke="#fff" stroke-width="0.9" fill="none" opacity="0.8"/><text x="1.2" y="15.6" font-family="Liberation Sans, sans-serif" font-weight="bold" font-size="16.5" fill="#f6ec10" stroke="#3e3800" stroke-width="0.55">?</text></svg>
<svg class="ic" style="left:303px;top:69px" width="30" height="30"><g transform="translate(-1.5 -2.5) scale(0.92)"><path d="M4.9 11.9L18.1 5.7L26 13.7L26 22.5L11 26.9L4.9 21.6Z" fill="#efc8b4"/><path d="M4.9 11.9L11 17.2V26.9L4.9 21.6Z" fill="#2c1a12"/><path d="M6.6 13.6V23M8.6 15.4V24.8" stroke="#6a4634" stroke-width="0.7"/><path d="M11 17.2L26 13.7V22.5L11 26.9Z" fill="#f3d0be"/><path d="M4.9 11.9L18.1 5.7L26 13.7L11 17.2Z" fill="#dcab93"/><path d="M7.6 11.6L15 8.2L19.4 12.6L12 15.4Z" fill="#e81818"/><path d="M7.6 11.6L12 15.4V17L7.6 13.4Z" fill="#a00c0c"/><path d="M9.4 11.8L14.6 9.6L17 12.2L12 14Z" fill="#f84848"/><circle cx="20.6" cy="8.8" r="1.5" fill="#e01818"/><circle cx="23" cy="13" r="1.5" fill="#e01818"/></g><path d="M8.4 25.8L17 18.4" stroke="#d8cc20" stroke-width="1.7"/><path d="M8.4 25.8L17 18.4" stroke="#6a6400" stroke-width="0.4" transform="translate(0.6 0.8)"/><path d="M19.8 11l1.8 3.5l3.9 0.5l-2.9 2.7l0.8 3.9l-3.6-2l-3.5 2l0.8-3.9l-2.9-2.7l3.9-0.5Z" fill="#f6ea2a" stroke="#5a5208" stroke-width="0.6"/></svg>
<svg class="ic" style="left:303px;top:121px" width="30" height="30"><path d="M4.9 11.9L18.1 5.7L26 13.7L26 22.5L11 26.9L4.9 21.6Z" fill="#efc8b4"/><path d="M4.9 11.9L11 17.2V26.9L4.9 21.6Z" fill="#2c1a12"/><path d="M6.6 13.6V23M8.6 15.4V24.8" stroke="#6a4634" stroke-width="0.7"/><path d="M11 17.2L26 13.7V22.5L11 26.9Z" fill="#f3d0be"/><path d="M4.9 11.9L18.1 5.7L26 13.7L11 17.2Z" fill="#dcab93"/><path d="M6.8 11.8L13.8 8.4L18 12.8L11 15.6Z" fill="#e81818"/><path d="M6.8 11.8L11 15.6V17L6.8 13.4Z" fill="#a00c0c"/><path d="M8.8 12L13.4 9.9L15.8 12.4L11.2 14.2Z" fill="#fa5050"/></svg>
<svg class="ic" style="left:303px;top:173px" width="30" height="30"><path d="M4.9 11.9L18.1 5.7L26 13.7L26 22.5L11 26.9L4.9 21.6Z" fill="#efc8b4"/><path d="M4.9 11.9L11 17.2V26.9L4.9 21.6Z" fill="#2c1a12"/><path d="M6.6 13.6V23M8.6 15.4V24.8" stroke="#6a4634" stroke-width="0.7"/><path d="M11 17.2L26 13.7V22.5L11 26.9Z" fill="#f3d0be"/><path d="M4.9 11.9L18.1 5.7L26 13.7L11 17.2Z" fill="#dcab93"/><ellipse cx="17.2" cy="8.7" rx="2.2" ry="1.4" fill="#e81818"/><ellipse cx="21.3" cy="13.4" rx="2.4" ry="1.7" fill="#e81818"/><ellipse cx="21.6" cy="13.2" rx="1.1" ry="0.7" fill="#fa6a6a"/></svg>
<svg class="ic" style="left:303px;top:225px" width="30" height="30"><path d="M7.5 15.4L25.7 11.9V21.6L7.5 26Z" fill="#f3d3c6" fill-opacity="0.9"/><path d="M2.2 9.3L18.1 3.4L25.7 11.9L7.5 15.4Z" fill="#e6c2b2" fill-opacity="0.45"/><path d="M2.2 9.3L18.1 3.4L25.7 11.9L25.7 21.6L7.5 26L7.5 15.4ZM7.5 15.4L25.7 11.9M2.2 9.3L4.6 13.2" stroke="#3a4ab4" stroke-width="1.1" fill="none" stroke-linejoin="round"/><path d="M6 8.6Q9.4 6.4 12.8 8.6L11 15.6h-3.2Z" fill="#d8483c"/><ellipse cx="9.4" cy="8.4" rx="3.5" ry="1.7" fill="#e81c1c"/><ellipse cx="9.4" cy="8.2" rx="1.8" ry="0.8" fill="#f88"/><path d="M18 14.8l3 3.4" stroke="#e8a090" stroke-width="2.4"/><ellipse cx="21.6" cy="18.6" rx="1.7" ry="2" fill="#e01818"/></svg>
<svg class="ic" style="left:303px;top:283px" width="30" height="30"><g transform="translate(10 1) scale(1.0)"><path d="M0 5L7 0L17 3L17 13L9 18L0 14Z" fill="#eec4ae"/><path d="M0 5L9 8.5V18L0 14Z" fill="#c79377"/><path d="M9 8.5L17 3V13L9 18Z" fill="#f6d6c5"/><path d="M0 5L7 0L17 3L9 8.5Z" fill="#dba98f"/><ellipse cx="7" cy="4" rx="3.2" ry="1.7" fill="#e01818"/><path d="M12.6 7.5v7M11 8.6h3.2" stroke="#e01818" stroke-width="1.8"/></g><path d="M2.6 13.5H12Q14.8 13.5 14.8 16.2Q14.8 19 12 19H6.4Q3.6 19 3.6 21.6V24.6H16" fill="none" stroke="#701a68" stroke-width="3.3" stroke-linejoin="round"/></svg>
<svg class="ic" style="left:303px;top:335px" width="30" height="30"><g transform="translate(10 0.5) scale(1.0)"><path d="M0 5L7 0L17 3L17 13L9 18L0 14Z" fill="#eec4ae"/><path d="M0 5L9 8.5V18L0 14Z" fill="#c79377"/><path d="M9 8.5L17 3V13L9 18Z" fill="#f6d6c5"/><path d="M0 5L7 0L17 3L9 8.5Z" fill="#dba98f"/><ellipse cx="7" cy="4" rx="3.2" ry="1.7" fill="#e01818"/><path d="M12.6 7.5v7M11 8.6h3.2" stroke="#e01818" stroke-width="1.8"/></g><g transform="translate(1.5 8.5) scale(1.0)"><ellipse cx="6" cy="15.5" rx="6.6" ry="2" fill="#6e6e6e" opacity="0.6"/><path d="M0 15Q0.4 8.4 6 8Q11.6 8.4 12 15Q6 17 0 15Z" fill="#1e62c8"/><circle cx="6" cy="4.6" r="3.7" fill="#eaa868"/><path d="M2.2 4Q6 -2.4 9.8 4Q6 1.8 2.2 4Z" fill="#5a3410"/></g></svg>
<svg class="ic" style="left:303px;top:387px" width="30" height="30"><g transform="translate(11 0) scale(0.95)"><path d="M0 5L7 0L17 3L17 13L9 18L0 14Z" fill="#eec4ae"/><path d="M0 5L9 8.5V18L0 14Z" fill="#c79377"/><path d="M9 8.5L17 3V13L9 18Z" fill="#f6d6c5"/><path d="M0 5L7 0L17 3L9 8.5Z" fill="#dba98f"/><ellipse cx="7" cy="4" rx="3.2" ry="1.7" fill="#e01818"/><path d="M12.6 7.5v7M11 8.6h3.2" stroke="#e01818" stroke-width="1.8"/></g><g transform="translate(0.5 7.5) scale(0.95)"><ellipse cx="6" cy="15.5" rx="6.6" ry="2" fill="#6e6e6e" opacity="0.6"/><path d="M0 15Q0.4 8.4 6 8Q11.6 8.4 12 15Q6 17 0 15Z" fill="#1e62c8"/><circle cx="6" cy="4.6" r="3.7" fill="#eaa868"/><path d="M2.2 4Q6 -2.4 9.8 4Q6 1.8 2.2 4Z" fill="#5a3410"/></g><g transform="translate(20 19.5)"><circle r="5.2" fill="none" stroke="#3848c0" stroke-width="3"/><path d="M0 -8V8M-8 0H8M-5.7 -5.7L5.7 5.7M5.7 -5.7L-5.7 5.7" stroke="#3848c0" stroke-width="2.6"/><circle r="2.6" fill="#e0e0e0"/></g></svg>
<svg class="ic" style="left:303px;top:439px" width="30" height="30"><path d="M2 9L12 3L26 7L26 21L12 28L3 23Z" fill="#f1cbb7"/><path d="M2 9L12 14V28L3 23Z" fill="#2a1810"/><path d="M2 9L12 3L26 7L12 14Z" fill="#dba78e"/><ellipse cx="12" cy="7" rx="4" ry="2" fill="#e01818"/><path d="M20 13v9M17.6 14.4h5" stroke="#e01818" stroke-width="2.2"/><path d="M5 24L23 6L27 9.5L9 27.5Z" fill="#f2c21a" stroke="#7a5a00" stroke-width="0.7"/><path d="M23 6L25.4 3.6L29.4 7L27 9.5Z" fill="#d03018"/><path d="M5 24L9 27.5L3.4 28.8Z" fill="#2a1a10"/></svg>
<svg class="ic" style="left:0;top:0;pointer-events:none" width="286" height="300"><path d="M0 241.5L286 268.9" stroke="#fff" stroke-opacity="0.55" stroke-width="1" stroke-dasharray="8.5 4" fill="none"/></svg>
</body></html>
